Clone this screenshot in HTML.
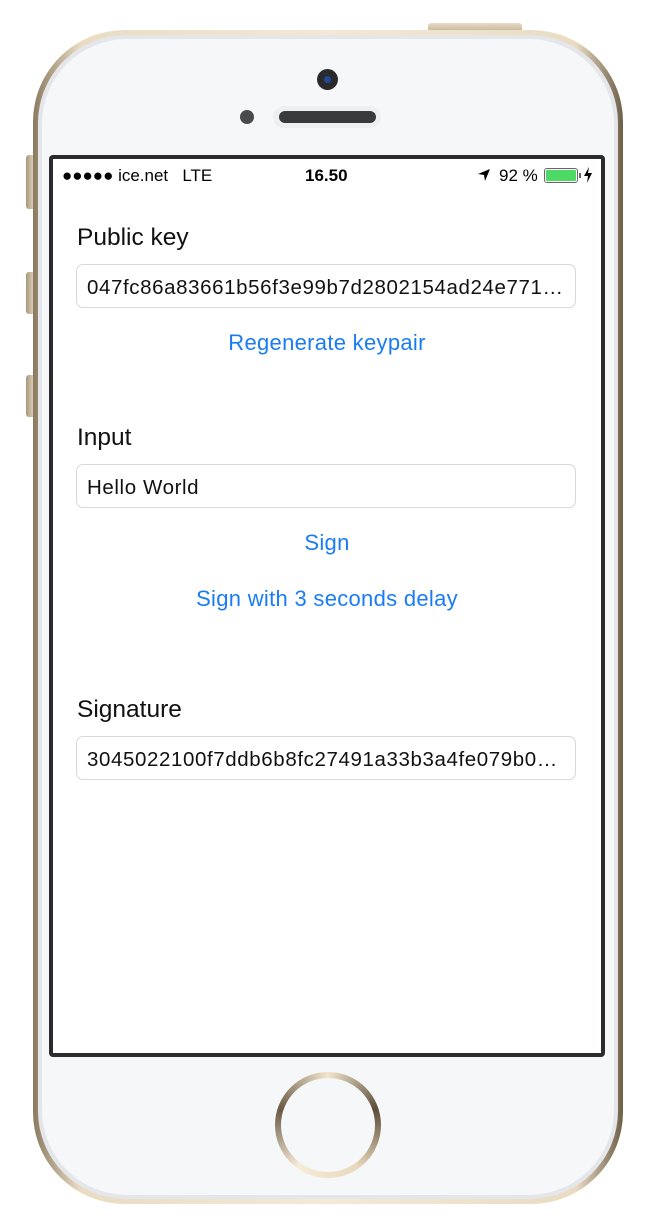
<!DOCTYPE html>
<html><head><style>
*{margin:0;padding:0;box-sizing:border-box}
body{width:658px;height:1230px;background:#fff;position:relative;overflow:hidden;font-family:"Liberation Sans",sans-serif}
.a{position:absolute}
.t{position:absolute;white-space:nowrap}
.lbl{font-size:24.5px;color:#111;left:77px}
.inp{position:absolute;left:76px;width:500px;height:44px;border:1px solid #d9d9d9;border-radius:7px;background:#fff;font-size:20.5px;letter-spacing:0.6px;color:#111;padding:0 0 0 10px;line-height:45px;white-space:nowrap;overflow:hidden}
.lnk{position:absolute;left:50px;width:554px;text-align:center;color:#1a7cf5;font-size:22px;letter-spacing:0.3px}
</style></head><body>
<div class="a" style="left:428px;top:23px;width:94px;height:10px;background:linear-gradient(#e8dcc6,#bfae90);border-radius:3px 3px 0 0"></div>
<div class="a" style="left:26px;top:155px;width:9px;height:54px;background:linear-gradient(90deg,#a8977a,#e8dcc6);border-radius:3px 0 0 3px"></div>
<div class="a" style="left:26px;top:272px;width:9px;height:42px;background:linear-gradient(90deg,#a8977a,#e8dcc6);border-radius:3px 0 0 3px"></div>
<div class="a" style="left:26px;top:375px;width:9px;height:42px;background:linear-gradient(90deg,#a8977a,#e8dcc6);border-radius:3px 0 0 3px"></div>
<div class="a" style="left:33px;top:30px;width:590px;height:1174px;border-radius:92px;background:linear-gradient(90deg,#8a7a60,#e9dcc3 8%,#f3e9d6 50%,#e9dcc3 92%,#6e5f48);"></div>
<div class="a" style="left:38px;top:35px;width:580px;height:1164px;border-radius:88px;background:#e4e6ea"></div>
<div class="a" style="left:42px;top:39px;width:572px;height:1156px;border-radius:85px;background:#f6f7f9"></div>
<div class="a" style="left:317px;top:69px;width:21px;height:21px;border-radius:50%;background:#2a2a2c"></div>
<div class="a" style="left:324px;top:76px;width:7px;height:7px;border-radius:50%;background:#1f4a9a"></div>
<div class="a" style="left:240px;top:110px;width:14px;height:14px;border-radius:50%;background:#4a4a4c"></div>
<div class="a" style="left:273px;top:106px;width:108px;height:22px;border-radius:11px;background:#eeeff2"></div>
<div class="a" style="left:279px;top:111px;width:97px;height:12px;border-radius:6px;background:#3a3a3c"></div>
<div class="a" style="left:275px;top:1072px;width:106px;height:106px;border-radius:50%;background:conic-gradient(#f2e6cf,#5c4d38,#e8d8bb,#f6ecd8,#6a5a44,#f2e6cf)"></div>
<div class="a" style="left:281px;top:1078px;width:94px;height:94px;border-radius:50%;background:#f6f7f9"></div>
<div class="a" style="left:49px;top:155px;width:556px;height:902px;background:#2b2b2d;border-radius:4px"></div>
<div class="a" style="left:53px;top:159px;width:548px;height:894px;background:#fff"></div>
<div class="t" style="left:62px;top:166px;font-size:17px;color:#000">●●●●● ice.net&nbsp;&nbsp; LTE</div>
<div class="t" style="left:305px;top:166px;font-size:17px;font-weight:bold;color:#000">16.50</div>
<svg class="a" style="left:477px;top:168px" width="14" height="14" viewBox="0 0 14 14"><path d="M13 1 L1 6 L7 7 L8 13 Z" fill="#000"/></svg>
<div class="t" style="left:499px;top:166px;font-size:17px;color:#000">92 %</div>
<div class="a" style="left:544px;top:168px;width:34px;height:15px;border:1px solid #666;border-radius:3px;padding:1px"><div style="width:100%;height:100%;background:#4cd964;border-radius:1px"></div></div>
<div class="a" style="left:579px;top:173px;width:2px;height:5px;background:#666"></div>
<svg class="a" style="left:584px;top:167px" width="8" height="16" viewBox="0 0 8 16"><path d="M5 0 L0 9 H4 L3 16 L8 6 H4 Z" fill="#000"/></svg>
<div class="t lbl" style="top:224px">Public key</div>
<div class="inp" style="top:264px">047fc86a83661b56f3e99b7d2802154ad24e771…</div>
<div class="lnk" style="top:330px">Regenerate keypair</div>
<div class="t lbl" style="top:424px">Input</div>
<div class="inp" style="top:464px">Hello World</div>
<div class="lnk" style="top:530px">Sign</div>
<div class="lnk" style="top:586px">Sign with 3 seconds delay</div>
<div class="t lbl" style="top:696px">Signature</div>
<div class="inp" style="top:736px">3045022100f7ddb6b8fc27491a33b3a4fe079b0…</div>
</body></html>
